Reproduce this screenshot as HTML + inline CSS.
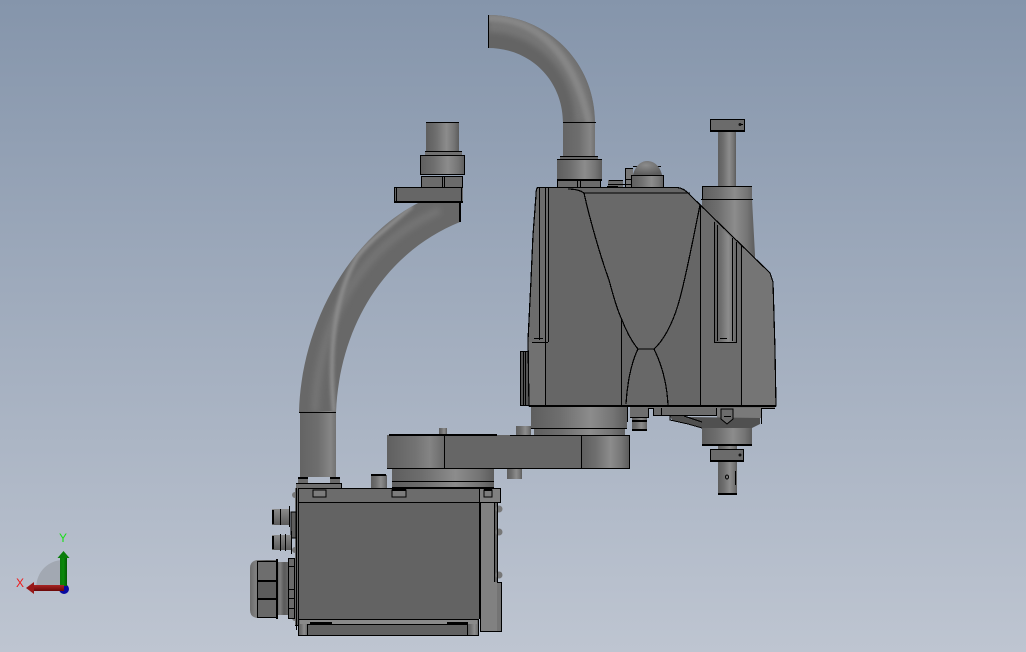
<!DOCTYPE html>
<html><head><meta charset="utf-8"><title>Robot</title>
<style>
html,body{margin:0;padding:0;width:1026px;height:652px;overflow:hidden;background:#a0acbc}
svg{display:block}
.k{stroke:#000;stroke-width:1;fill:none;shape-rendering:crispEdges}
.b{stroke:#000;stroke-width:1;shape-rendering:crispEdges}
.t{stroke:#000;stroke-width:2;fill:none;shape-rendering:crispEdges}
text{font-family:"Liberation Sans",sans-serif}
</style></head><body>
<svg width="1026" height="652" viewBox="0 0 1026 652" xmlns="http://www.w3.org/2000/svg">
<defs>
<linearGradient id="bg" x1="0" y1="0" x2="0" y2="1"><stop offset="0" stop-color="#8595ab"/><stop offset="1" stop-color="#bec5d1"/></linearGradient>
<linearGradient id="c"><stop offset="0" stop-color="#5e5e5e"/><stop offset=".3" stop-color="#6e6e6e"/><stop offset=".62" stop-color="#8c8c8c"/><stop offset=".85" stop-color="#757575"/><stop offset="1" stop-color="#5c5c5c"/></linearGradient>
<linearGradient id="c2"><stop offset="0" stop-color="#606060"/><stop offset=".5" stop-color="#737373"/><stop offset=".75" stop-color="#848484"/><stop offset="1" stop-color="#6a6a6a"/></linearGradient>
<linearGradient id="h"><stop offset="0" stop-color="#646464"/><stop offset=".5" stop-color="#6e6e6e"/><stop offset=".85" stop-color="#868686"/><stop offset="1" stop-color="#727272"/></linearGradient>
<linearGradient id="gl"><stop offset="0" stop-color="#6a6a6a"/><stop offset=".2" stop-color="#808080"/><stop offset=".6" stop-color="#5a5a5a"/><stop offset="1" stop-color="#666"/></linearGradient>
<linearGradient id="cv" x1="0" y1="0" x2="0" y2="1"><stop offset="0" stop-color="#8a8a8a"/><stop offset="1" stop-color="#5a5a5a"/></linearGradient>
<radialGradient id="dm" cx=".45" cy=".3" r=".7"><stop offset="0" stop-color="#8c8c8c"/><stop offset="1" stop-color="#5c5c5c"/></radialGradient>
<linearGradient id="g"><stop offset="0" stop-color="#0a7a0a"/><stop offset=".5" stop-color="#0a8a0a"/><stop offset="1" stop-color="#045a04"/></linearGradient>
<linearGradient id="r" x1="0" y1="0" x2="0" y2="1"><stop offset="0" stop-color="#a82424"/><stop offset="1" stop-color="#6a0808"/></linearGradient>
<filter id="bl" x="-30%" y="-30%" width="160%" height="160%"><feGaussianBlur stdDeviation="3"/></filter>
<filter id="bs" x="-30%" y="-30%" width="160%" height="160%"><feGaussianBlur stdDeviation="1.500"/></filter>
<clipPath id="hu"><path d="M488,15 C545,15 595,60 595,123 H563 C563,80 530,48 488,48Z"/></clipPath>
<clipPath id="hl"><path d="M299,412 C301,330 345,240 420,202 L460,202 V222 C390,250 340,320 336,412Z"/></clipPath>
<clipPath id="bd"><path d="M538,187.5 H677 Q684,188 690,195 L770,273 L773,282 L775,350 L776,406 H529 L528,340 L531,280 L533,235 L536,195 Q536,188 538,187.5Z"/></clipPath>
</defs>
<rect width="1026" height="652" fill="url(#bg)"/>

<!-- upper hose -->
<path d="M488,15 C545,15 595,60 595,123 H563 C563,80 530,48 488,48Z" fill="#646464"/>
<g clip-path="url(#hu)" fill="none">
<path d="M488,22 C540,22 585,65 585,123" stroke="#767676" stroke-width="20" filter="url(#bl)"/>
<path d="M488,18 C530,18 572,45 589,123" stroke="#868686" stroke-width="7" filter="url(#bs)"/>
</g>
<rect x="488" y="15" width="1" height="33" fill="#000"/>
<rect x="563" y="122" width="32" height="35" fill="url(#h)"/>
<path class="k" d="M563,122.500 H596"/>
<rect x="560" y="156" width="38" height="3" fill="#666"/>
<rect x="557" y="159" width="45" height="21" fill="url(#c)"/>
<path class="k" d="M560,156.500 H598 M557,159.500 H602"/>
<path class="t" d="M557,180 H602"/>
<rect x="557" y="181" width="44" height="6" fill="#6b6b6b"/>
<path class="k" d="M557.500,181 V187 M577.500,181 V187 M580.500,181 V187 M600.500,181 V187"/>

<!-- small parts on body top -->
<rect x="625" y="168" width="8" height="19" fill="#777"/>
<path class="k" d="M625,168.500 H633 M625,179.500 H633 M625.500,168 V187 M633,166.500 H661"/>
<rect x="608" y="180" width="15" height="7" fill="#6a6a6a"/>
<path class="k" d="M609,180.500 H623 M608,184.500 H631 M607,186.500 H618"/>
<path d="M633,175 C635,166 641,161 647,161 C654,161 660,166 662,175Z" fill="url(#dm)"/>
<rect x="631" y="175" width="33" height="12" fill="url(#c)"/>
<path class="k" d="M631,175.500 H664 M631.500,175 V187 M663.500,175 V187"/>

<!-- column behind -->
<rect x="710" y="119" width="35" height="12" fill="#6b6b6b"/>
<path class="k" d="M710.500,119 V131 M744.500,119 V131 M710,119.500 H745"/>
<path class="t" d="M710,131 H745"/>
<circle cx="740" cy="124.500" r="1.500" fill="#111"/>
<path class="k" d="M741,124.500 H743"/>
<rect x="718" y="132" width="18" height="54" fill="url(#c)"/>
<path d="M702,186 H752 V199 L755,255 V300 H702Z" fill="url(#c)"/>
<path class="k" d="M702,186.500 H752 M701,199.500 H753 M702.500,186 V199"/>

<!-- lower hose -->
<path d="M299,412 C301,330 345,240 420,202 L460,202 V222 C390,250 340,320 336,412Z" fill="#686868"/>
<g clip-path="url(#hl)" fill="none">
<path d="M315,412 C318,330 352,250 440,210" stroke="#747474" stroke-width="8" filter="url(#bl)"/>
<path d="M334,412 C328,350 335,295 357,257 C370,240 385,230 412,206" stroke="#8e8e8e" stroke-width="4" filter="url(#bs)"/>
</g>
<rect x="300" y="411" width="36" height="66" fill="url(#h)"/>
<path class="k" d="M299,412.500 H336"/>
<path class="t" d="M460,200 V222"/>

<!-- hose top fitting -->
<rect x="426" y="122" width="33" height="29" fill="url(#c)"/>
<path class="k" d="M426,122.500 H459"/>
<rect x="425" y="151" width="37" height="4" fill="#707070"/>
<path class="k" d="M425,151.500 H462"/>
<rect x="420" y="155" width="45" height="19" fill="url(#c)"/>
<path class="k" d="M420,155.500 H465 M420,174.500 H465 M420.500,155 V174 M464.500,155 V174"/>
<rect x="421" y="176" width="42" height="11" fill="#6b6b6b"/>
<path class="k" d="M421.500,176 V187 M442.500,176 V187 M444.500,176 V187 M462.500,176 V187 M421,176.500 H463"/>
<rect x="394" y="187" width="69" height="15" fill="#666"/>
<path class="k" d="M394,187.500 H463 M394.500,187 V202 M396.500,187 V202 M461.500,187 V202"/>
<path class="t" d="M394,202 H463"/>

<!-- under-body -->
<rect x="531" y="406" width="96" height="23" fill="url(#c)"/>
<rect x="534" y="429" width="91" height="6" fill="url(#c)"/>
<path class="k" d="M531,428.500 H627"/>
<rect x="516" y="426" width="15" height="9" fill="url(#c)"/>
<rect x="439" y="428" width="8" height="7" fill="url(#c)"/>
<rect x="387" y="435" width="57" height="34" fill="url(#c2)"/>
<rect x="444" y="435" width="137" height="34" fill="#666"/>
<rect x="581" y="435" width="48" height="34" fill="url(#c)"/>
<path class="k" d="M387,468.500 H630 M444.500,435 V469 M581.500,435 V469 M629.500,435 V469 M510,435.500 H629"/>
<path class="t" d="M389,435 H497"/>
<rect x="392" y="469" width="102" height="19" fill="url(#c)"/>
<path class="k" d="M392,481.500 H494"/>
<path class="t" d="M392,488 H494"/>
<rect x="507" y="469" width="15" height="10" fill="url(#c)"/>
<rect x="371" y="475" width="16" height="13" fill="url(#c)"/>
<path class="t" d="M371,475 H386"/>

<!-- right under parts -->
<rect x="630" y="406" width="145" height="3" fill="#707070"/>
<path class="k" d="M630,408.500 H775"/>
<rect x="630" y="408" width="19" height="10" fill="#6e6e6e"/>
<rect x="632" y="418" width="15" height="12" fill="url(#c)"/>
<path class="t" d="M632,421 H647 M632,430 H647"/>
<path class="k" d="M630,417.500 H648 M648.500,408 V418 M627.500,406 V422"/>
<rect x="653" y="408" width="64" height="8" fill="#6c6c6c"/>
<path class="k" d="M653.500,408 V415 M661.500,408 V415 M653,415.500 H716 M716.500,408 V416"/>
<rect x="717" y="408" width="45" height="10" fill="#7a7a7a"/>
<path d="M670,416 H686 V417 L760,418 V424 L752,428 H702 L688,424 L672,420Z" fill="#505050"/>
<path class="k" d="M670,416 V420 L688,424 L702,428 M684,416 L702,422"/>
<path d="M721,409 H733 V419 L727,424 L721,419Z" fill="#6c6c6c" stroke="#000" stroke-width="1"/>
<path class="k" d="M724,416.500 H731 M761.500,408 V424"/>
<rect x="702" y="428" width="50" height="17" fill="url(#c)"/>
<path class="t" d="M702,445 H752"/>
<rect x="718" y="446" width="19" height="48" fill="url(#c)"/>
<rect x="710" y="449" width="34" height="12" fill="#6b6b6b"/>
<path class="k" d="M710.500,449 V461 M743.500,449 V461 M710,449.500 H744"/>
<path class="t" d="M710,461 H744"/>
<circle cx="740" cy="455" r="1.500" fill="#111"/>
<ellipse cx="727" cy="477" rx="1.500" ry="2" fill="none" stroke="#000" stroke-width="1"/>
<path class="k" d="M735.500,471 V485"/>
<path class="t" d="M718,494 H737"/>

<!-- main body -->
<path d="M520,351 H529 V405 H520Z" fill="#555"/>
<path class="k" d="M520.500,352 V405 M523.500,352 V405 M525.500,352 V405 M528,351.500 H520 M520,405.500 H529"/>
<path d="M538,187.500 H677 Q684,188 690,195 L770,273 L773,282 L775,350 L776,406 H529 L528,340 L531,280 L533,235 L536,195 Q536,188 538,187.500Z" fill="#666"/>
<g clip-path="url(#bd)">
<rect x="528" y="187" width="20" height="155" fill="#6c6c6c"/>
<rect x="528" y="342" width="18" height="64" fill="#717171"/>
<path d="M584,193 H690 L700,205 L686,280 L674,320 L654,349 H638 L620,317 L609,280Z" fill="#696969"/>
<path d="M638,349 H654 C662,365 667,390 668,406 H626 C626,390 630,365 638,349Z" fill="#686868"/>
<rect x="700" y="200" width="76" height="206" fill="#6c6c6c"/>
<rect x="742" y="240" width="34" height="166" fill="#757575"/>
<path d="M714,220 L737,243 V342 H714Z" fill="url(#c)"/>
</g>
<path d="M538,187.500 H677 Q684,188 690,195 L770,273 L773,282 L775,350 L776,406 H529 L528,340 L531,280 L533,235 L536,195 Q536,188 538,187.500Z" fill="none" stroke="#000" stroke-width="1.200" shape-rendering="crispEdges"/>
<g stroke="#000" stroke-width="1.200" fill="none" shape-rendering="crispEdges">
<path d="M568,189 C575,189 580,190 584,193 H690"/>
<path d="M584,193 C590,220 600,255 609,280 C613,295 618,312 622,320 C627,333 633,343 638,349 H654 C663,341 672,325 678,305 C684,285 692,245 700,205"/>
<path d="M638,349 C631,363 627,385 626,404 M654,349 C662,365 667,385 668,405"/>
</g>
<path class="k" d="M621.500,318 V406 M700.500,205 V406 M741.500,245 V406 M714.500,222 V342 M717.500,225 V341 M732.500,238 V341 M736.500,242 V342 M714,342.500 H737 M720,338.500 H727"/>
<path class="k" d="M539.500,188 V340 M545.500,188 V342 M548.500,188 V342 M532,342.500 H548 M534,338.500 H543 M545.500,342 V405"/>
<path class="t" d="M529,406 H776"/>

<!-- controller -->
<rect x="296" y="483" width="46" height="5" fill="#6e6e6e"/>
<rect x="298" y="477" width="10" height="6" fill="#6a6a6a"/>
<rect x="330" y="477" width="10" height="6" fill="#6a6a6a"/>
<path class="t" d="M298,478 H308 M330,478 H340"/>
<path class="k" d="M296,483.500 H342 M341.500,483 V488"/>
<rect x="480" y="502" width="17" height="129" fill="#818181"/>
<rect x="497" y="582" width="5" height="49" fill="#747474"/>
<rect x="495" y="503" width="3" height="79" fill="#606060"/>
<circle cx="499" cy="509" r="3.500" fill="#777"/>
<circle cx="499" cy="532" r="3.500" fill="#777"/>
<circle cx="499" cy="575" r="3.500" fill="#777"/>
<path class="k" d="M480,631.500 H502 M501.500,582 V631 M497,582.500 H502 M494.500,503 V582 M497.500,503 V582 M480.500,502 V631 M479.500,503 V619"/>
<rect x="298" y="503" width="181" height="116" fill="#636363"/>
<rect x="299" y="488" width="180" height="15" fill="#6c6c6c"/>
<rect x="479" y="488" width="22" height="14" fill="#808080"/>
<path class="k" d="M299,488.500 H501 M299,502.500 H501 M500.500,488 V502 M479.500,488 V502 M298.500,488 V625"/>
<rect x="313" y="490" width="13" height="7" fill="#7c7c7c" class="b"/>
<rect x="392" y="490" width="14" height="7" fill="#7c7c7c" class="b"/>
<rect x="484" y="490" width="8" height="7" fill="#7c7c7c" class="b"/>
<path class="t" d="M392,490 H406 M484,490 H492"/>
<rect x="298" y="619" width="181" height="16" fill="#6f6f6f"/>
<rect x="300" y="620" width="177" height="4" fill="#8a8a8a"/>
<rect x="308" y="624" width="159" height="11" fill="#616161"/>
<rect x="467" y="624" width="12" height="11" fill="url(#c)"/>
<rect x="298" y="624" width="10" height="11" fill="url(#c)"/>
<path class="k" d="M298,619.500 H479 M298,635.500 H479 M298.500,619 V635 M478.500,619 V635 M307.500,624 V635 M467.500,624 V635 M308,624.500 H467"/>
<path class="t" d="M310,623 H332 M447,623 H468"/>
<!-- left side -->
<circle cx="295" cy="495" r="3" fill="#777"/>
<circle cx="295" cy="550" r="3" fill="#777"/>
<circle cx="295" cy="566" r="3" fill="#777"/>
<circle cx="295" cy="618" r="3" fill="#777"/>
<rect x="295" y="488" width="3" height="137" fill="#666"/>
<path class="k" d="M296.500,488 V630 M295,625.500 H299"/>
<rect x="291" y="512" width="5" height="26" fill="#5e5e5e" class="b"/>
<rect x="272" y="509" width="18" height="16" fill="url(#cv)"/>
<path class="t" d="M273,510 V524"/>
<path class="k" d="M280.500,509 V525 M289.500,506 V527"/>
<rect x="272" y="535" width="20" height="15" fill="url(#cv)"/>
<path class="t" d="M273,536 V549"/>
<path class="k" d="M280.500,534 V551 M285.500,534 V551 M291.500,531 V554"/>
<rect x="278" y="562" width="10" height="53" fill="url(#gl)"/>
<path d="M257,560 H278 V618 H257 Q250,617 250,610 V568 Q250,561 257,560Z" fill="url(#gl)"/>
<rect x="257" y="561" width="19" height="19" fill="#6e6e6e"/>
<rect x="257" y="582" width="19" height="16" fill="#5c5c5c"/>
<rect x="257" y="600" width="19" height="17" fill="#686868"/>
<path class="k" d="M257.500,561 V618 M276.500,559 V619 M277.500,559 V619 M257,561.500 H277 M257,580.500 H277 M257,581.500 H277 M257,598.500 H277 M257,599.500 H277 M257,617.500 H277"/>
<rect x="288" y="558" width="7" height="61" fill="#6a6a6a"/>
<path class="k" d="M288.500,558 V619 M294.500,558 V619 M288,558.500 H295 M288,566.500 H295 M288,589.500 H295 M288,598.500 H295 M288,608.500 H295 M288,618.500 H295"/>

<!-- triad -->
<path d="M63.300,586.700 V560 A27,27 0 0 0 36.300,586.700Z" fill="#a2a8b2"/>
<circle cx="64" cy="589" r="5" fill="#0a0aa0"/>
<rect x="60" y="557" width="7" height="29" fill="url(#g)"/>
<path d="M63.500,551 L69.500,558 H57.500Z" fill="#0a7d0a"/>
<rect x="33" y="585" width="31" height="6" fill="url(#r)"/>
<path d="M26,588 L34,582 V594Z" fill="#981818"/>
<text x="63" y="542" font-size="12" fill="#18e018" text-anchor="middle">Y</text>
<text x="20" y="587" font-size="12" fill="#f01818" text-anchor="middle">X</text>
</svg>
</body></html>
